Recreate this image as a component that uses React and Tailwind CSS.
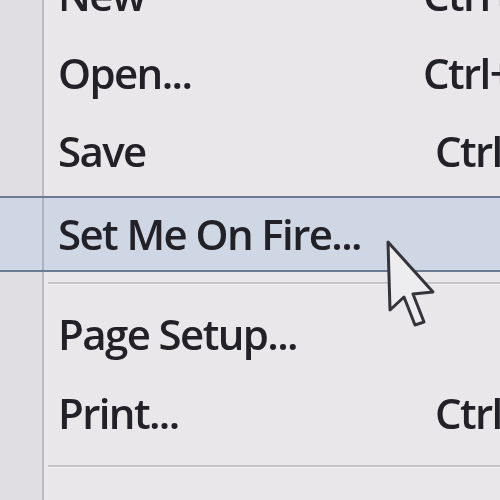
const ITEMS = [
  { label: 'New', key: 'Ctrl+N', h: 'h-[78px]', keyX: 'left-[379px]' },
  { label: 'Open...', key: 'Ctrl+O', h: 'h-[78px]', keyX: 'left-[379px]' },
  { label: 'Save', key: 'Ctrl+S', h: 'h-[77px]', keyX: 'left-[391px]' },
];

function Row({ label, shortcut, h, keyX, active }) {
  return (
    <div className={`flex ${h} ${active ? 'bg-[#cfd6e4] border-y-2 border-[#6f7b93]' : ''}`}>
      <div className={`w-[42px] shrink-0 ${active ? '' : 'bg-[#e0dee2]'}`} />
      <div className={`w-[2px] shrink-0 ${active ? 'bg-[#aab2c3]' : 'bg-[#bcbac0]'}`} />
      <div className="relative flex-1 flex items-center pl-[14px]">
        <span className="text-[#222127]">{label}</span>
        {shortcut && <span className={`absolute ${keyX} text-[#222127]`}>{shortcut}</span>}
      </div>
    </div>
  );
}

function Separator({ className, line = true }) {
  return (
    <div className={`flex ${className}`}>
      <div className="w-[42px] shrink-0 bg-[#e0dee2]" />
      <div className="w-[2px] shrink-0 bg-[#bcbac0]" />
      <div className="flex-1 flex flex-col justify-center pl-[4px]">
        {line && <div className="h-[2px] bg-[#c6c5ca]" />}
        {line && <div className="h-[1px] bg-[#f2f1f3]" />}
      </div>
    </div>
  );
}

export default function App() {
  return (
    <div
      className="w-[500px] h-[500px] overflow-hidden bg-[#e9e7ea] relative blur-[0.6px]"
      style={{ fontFamily: '"Open Sans", "Noto Sans", sans-serif' }}
    >
      <div className="w-[600px] -mt-[44px] text-[42px] leading-none font-semibold tracking-[-1.6px]">
        {ITEMS.map(it => (
          <Row key={it.label} label={it.label} shortcut={it.key} h={it.h} keyX={it.keyX} />
        ))}
        <Separator className="h-[7px]" line={false} />
        <Row label="Set Me On Fire..." h="h-[76px]" active />
        <Separator className="h-[22px]" />
        <Row label="Page Setup..." h="h-[80px]" />
        <Row label="Print..." shortcut="Ctrl+P" h="h-[78px]" keyX="left-[391px]" />
        <Separator className="h-[28px]" />
        <Row label="" h="h-[60px]" />
      </div>

      {/* mouse pointer */}
      <svg className="absolute left-[380px] top-[235px]" width="60" height="100" viewBox="0 0 60 100">
        <path
          d="M8 7 L10 75 L24 62 L35 90 L44 87 L33 59 L53 57 Z"
          fill="#ededf0"
          stroke="#34343a"
          strokeWidth="3"
          strokeLinejoin="round"
        />
      </svg>
    </div>
  );
}
